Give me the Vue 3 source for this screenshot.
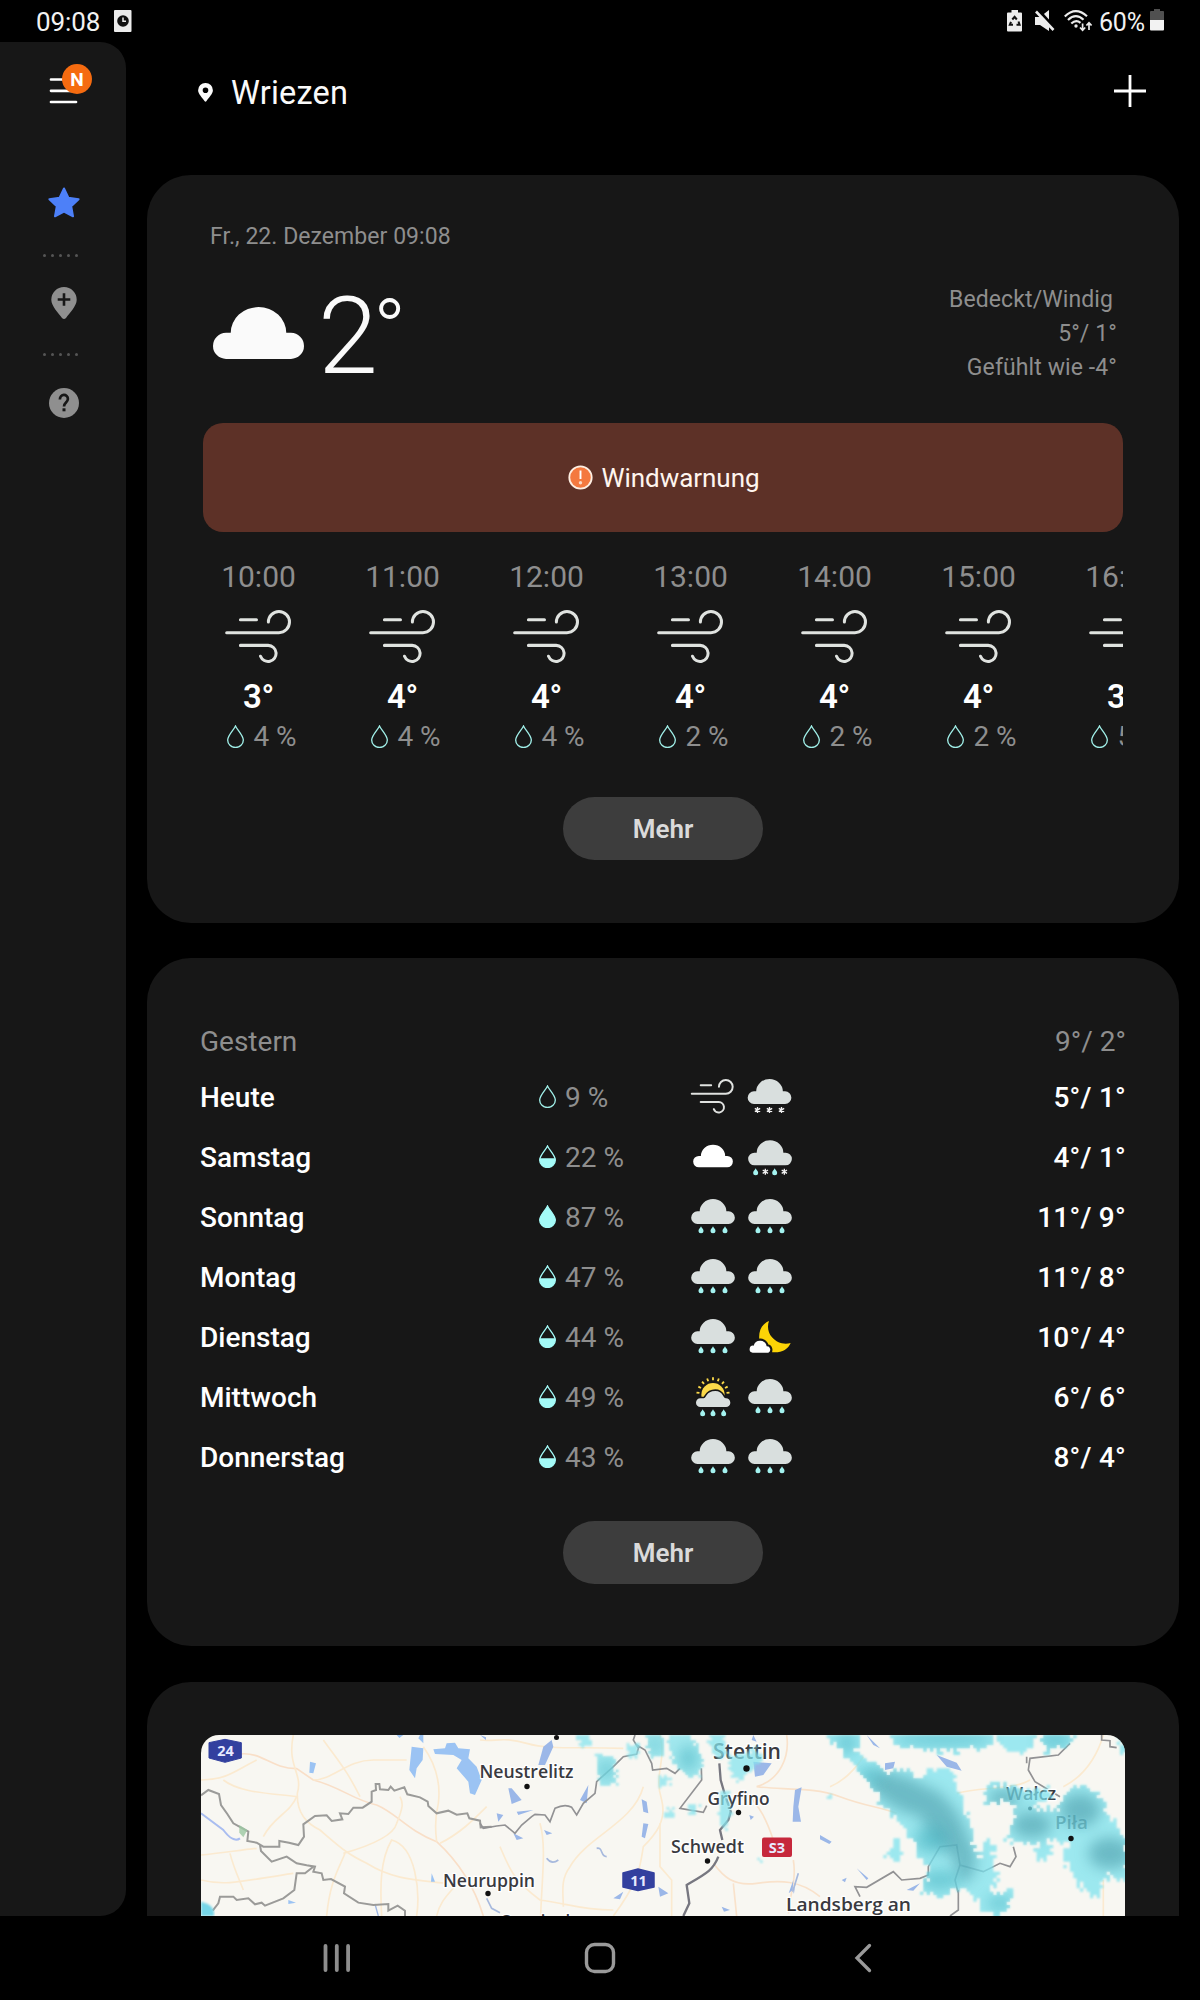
<script setup>
import { h } from 'vue'

const hours = [
  { time: '10:00', temp: '3°', rain: '4 %' },
  { time: '11:00', temp: '4°', rain: '4 %' },
  { time: '12:00', temp: '4°', rain: '4 %' },
  { time: '13:00', temp: '4°', rain: '2 %' },
  { time: '14:00', temp: '4°', rain: '2 %' },
  { time: '15:00', temp: '4°', rain: '2 %' },
  { time: '16:00', temp: '3°', rain: '5 %' },
]

const days = [
  { name: 'Heute', rain: '9 %', level: 'empty', icons: ['wind', 'snow'], temp: '5°/ 1°' },
  { name: 'Samstag', rain: '22 %', level: 'half', icons: ['cloud', 'sleet'], temp: '4°/ 1°' },
  { name: 'Sonntag', rain: '87 %', level: 'full', icons: ['rain', 'rain'], temp: '11°/ 9°' },
  { name: 'Montag', rain: '47 %', level: 'half', icons: ['rain', 'rain'], temp: '11°/ 8°' },
  { name: 'Dienstag', rain: '44 %', level: 'half', icons: ['rain', 'moon'], temp: '10°/ 4°' },
  { name: 'Mittwoch', rain: '49 %', level: 'half', icons: ['sunrain', 'rain'], temp: '6°/ 6°' },
  { name: 'Donnerstag', rain: '43 %', level: 'half', icons: ['rain', 'rain'], temp: '8°/ 4°' },
]

const DROP = 'M25.5 3C31 15 49 31 49 45A23.5 22.5 0 0 1 2 45C2 31 20 15 25.5 3Z'
const CLOUD = 'M39 155A39 39 0 0 1 39 77H53A83 77 0 0 1 219 77H233A39 39 0 0 1 233 155Z'
const WIND = 'M46 29H94M5 67.5H161A31.5 31.5 0 1 0 129.5 36M46 105.5H129A24 24 0 1 1 106 138'

const Drop = ({ level = 'empty' }) =>
  h('svg', { width: 17, height: 23, viewBox: '0 0 51 69' }, [
    h('path', { d: DROP, fill: level === 'full' ? '#a4fbf8' : 'none', stroke: level === 'empty' ? '#a0efe8' : '#a4fbf8', 'stroke-width': 4 }),
    level === 'half' ? h('path', { d: 'M2 40H49V45A23.5 22.5 0 0 1 2 45Z', fill: '#a4fbf8' }) : null,
  ])

const mini = (x, y) => h('path', { d: `M${x} ${y}C${x + 2} ${y + 5} ${x + 7.5} ${y + 8} ${x + 7.5} ${y + 13}A7.5 7.5 0 0 1 ${x - 7.5} ${y + 13}C${x - 7.5} ${y + 8} ${x - 2} ${y + 5} ${x} ${y}Z`, fill: '#a4f3f0' })
const flake = (x, y) => h('path', { d: `M${x} ${y - 9}V${y + 9}M${x - 8} ${y - 5}L${x + 8} ${y + 5}M${x + 8} ${y - 5}L${x - 8} ${y + 5}`, stroke: '#f2f2f2', 'stroke-width': 4, fill: 'none' })
const bigCloud = (y) => h('path', { d: CLOUD, fill: '#d9dfde', transform: `translate(-65.5 ${y}) scale(.482)` })

const Sky = ({ kind }) => {
  let kids = []
  if (kind === 'wind') kids = [h('path', { d: WIND, transform: 'translate(-67 -54) scale(.655)', fill: 'none', stroke: '#e0e2e0', 'stroke-width': 9, 'stroke-linecap': 'round' })]
  if (kind === 'cloud') kids = [h('path', { d: CLOUD, fill: '#fff', transform: 'translate(-59.5 -37) scale(.438)' })]
  if (kind === 'rain') kids = [bigCloud(-54), mini(-36, 28), mini(0, 28), mini(36, 28)]
  if (kind === 'snow') kids = [h('g', { transform: 'translate(-1.5 0)' }, [bigCloud(-54), flake(-36, 39), flake(0, 39), flake(36, 39)])]
  if (kind === 'sleet') kids = [bigCloud(-50), mini(-43, 34), flake(-14, 44), mini(14, 34), flake(43, 44)]
  if (kind === 'moon')
    kids = [
      h('path', { d: 'M-3 -48C-26 -38 -35 -16 -32 8C-26 34 -8 45 15 46C37 46 55 36 62 18C42 25 18 16 6 1C-6 -13 -9 -31 -3 -48Z', fill: '#fcd406' }),
      h('path', { d: 'M-52 47A10.5 10.5 0 0 1 -49 26A20 20 0 0 1 -10 28A10 10 0 0 1 -5 47Z', fill: '#fff', stroke: '#171717', 'stroke-width': 13, 'paint-order': 'stroke' }),
    ]
  if (kind === 'sunrain') {
    const rays = Array.from({ length: 9 }, (_, i) => {
      const a = ((188 + i * 20.5) * Math.PI) / 180
      return `M${41 * Math.cos(a)} ${-6 + 44 * Math.sin(a)}L${50 * Math.cos(a)} ${-6 + 53 * Math.sin(a)}`
    }).join('')
    kids = [
      h('path', { d: rays, stroke: '#fbd94a', 'stroke-width': 5.5 }),
      h('circle', { cx: 0, cy: -7, r: 35, fill: '#fbd94a' }),
      h('path', { d: 'M-38 30A13 13 0 0 1 -38 4H-28C-20 4 -21 -18 7 -18C31 -18 29 4 39 4A13 13 0 0 1 39 30Z', fill: '#d9dfde', stroke: '#171717', 'stroke-width': 10, 'paint-order': 'stroke' }),
      h('rect', { x: -60, y: 30, width: 120, height: 12, fill: '#171717' }),
      mini(-31, 37), mini(0, 37), mini(32, 37),
    ]
  }
  return h('svg', { width: 48, height: 48, viewBox: '-72 -72 144 144' }, kids)
}

// Precipitation areas on the map, outlined as polygons and filled with small cells
const shift = (poly) => poly.map((v, i) => v + (i % 2 ? 150 : 1080))
const zones = [
  [-55, 15, 60, 15, 50, 60, 90, 90, 140, 125, 200, 118, 240, 150, 275, 115, 340, 122, 352, 190, 385, 260, 400, 330, 420, 390, 432, 330, 470, 335, 460, 400, 470, 440, 450, 490, 515, 480, 512, 525, 480, 557, 425, 540, 400, 495, 350, 475, 300, 505, 243, 482, 272, 420, 230, 370, 215, 320, 135, 235, 90, 160, 45, 110, -10, 50],
  [140, 15, 462, 15, 455, 50, 330, 65, 230, 62, 160, 42],
  [468, 15, 590, 15, 550, 68, 490, 55],
  [600, 15, 708, 15, 682, 50, 620, 72],
  [434, 182, 460, 160, 500, 170, 530, 182, 620, 175, 640, 205, 590, 225, 600, 245, 655, 235, 680, 185, 720, 160, 790, 200, 800, 245, 856, 330, 856, 455, 800, 430, 775, 505, 735, 480, 690, 425, 668, 370, 700, 350, 660, 330, 560, 342, 500, 330, 528, 260, 512, 212, 440, 218],
  [588, 350, 642, 348, 622, 400, 590, 388],
  [162, 305, 186, 350, 180, 392, 138, 390, 155, 350],
  [830, 20, 856, 35, 856, 85, 838, 60],
].map(shift)
const smallZones = [
  [290, 165, 332, 165, 330, 200, 300, 200], [350, 225, 405, 235, 410, 315, 360, 315], [440, 190, 480, 190, 475, 235, 445, 230],
  [500, 165, 550, 165, 550, 240, 510, 235], [568, 165, 630, 165, 665, 220, 665, 285, 625, 295, 575, 240],
  [680, 165, 730, 165, 745, 225, 710, 235], [745, 235, 830, 205, 850, 240, 770, 305, 750, 280], [535, 285, 570, 290, 570, 320, 540, 325],
  [555, 390, 585, 380, 580, 410, 555, 415], [620, 375, 660, 380, 650, 402, 625, 400], [715, 335, 750, 330, 755, 400, 730, 460, 715, 410],
  [1033, 350, 1053, 345, 1050, 365], [835, 530, 848, 530, 842, 550],
]
const inside = (poly, x, y) => {
  let hit = false
  for (let i = 0, j = poly.length - 2; i < poly.length; j = i, i += 2) {
    const [xi, yi, xj, yj] = [poly[i], poly[i + 1], poly[j], poly[j + 1]]
    if (yi > y !== yj > y && x < ((xj - xi) * (y - yi)) / (yj - yi) + xi) hit = !hit
  }
  return hit
}
const noise = (a, b) => {
  const s = Math.sin(a * 12.9898 + b * 78.233) * 43758.5453
  return s - Math.floor(s) - 0.5
}
const cells = (polys, size, spread) => {
  let d = ''
  for (let y = 165; y < 708; y += size)
    for (let x = 280; x < 1940; x += size) {
      const px = x + size / 2 + noise(x, y) * spread
      const py = Math.max(167, y + size / 2 + noise(y, x) * spread)
      if (polys.some((p) => inside(p, px, py))) d += `M${x} ${y}h${size}v${size}h-${size}z`
    }
  return d
}
const radar = cells(zones, 10, 20)
const radarSmall = cells(smallZones, 8, 14)
</script>

<template>
  <div class="screen">
    <header class="status">
      <span class="clock">09:08</span>
      <svg class="st-app" width="18" height="23" viewBox="0 0 18 23"><rect width="17.500" height="22" rx="1" fill="#ececec" /><circle cx="9" cy="11" r="5.800" fill="#111" /><path d="M9 7.500V11.300H12" stroke="#ececec" stroke-width="1.500" fill="none" /></svg>
      <span class="spacer"></span>
      <svg class="st-bat" width="16" height="22" viewBox="0 0 16 22"><path d="M4.500 0H11V2.500H14Q15 2.500 15 3.500V20.500Q15 21.500 14 21.500H1Q0 21.500 0 20.500V3.500Q0 2.500 1 2.500H4.500Z" fill="#ececec" /><path d="M5.300 9.500L7.600 6.800L9.800 9.500M11.500 11.500L12.600 14.800H9.500M6 14.800H2.800L4 11.800" fill="none" stroke="#111" stroke-width="2" /></svg>
      <svg class="st-mute" width="20" height="22" viewBox="0 0 20 22"><path d="M0 7H5L14 0V21L5 15H0Z" fill="#ececec" /><path d="M2 -1.500L21 19.500" stroke="#000" stroke-width="3" /><path d="M1 1.500L18.500 20" stroke="#ececec" stroke-width="2.600" /></svg>
      <svg class="st-wifi" width="29" height="22" viewBox="0 0 29 22" fill="none" stroke="#ececec" stroke-width="2.200"><path d="M.8 6.500Q11.500 -4 23 6.200M4 10Q11.700 2.500 19.500 9.700M7.300 13.500Q12 9 16.500 12.800" /><circle cx="12" cy="16" r="1.700" fill="#ececec" stroke="none" /><path d="M18.600 13.500V20M16 17.500L18.600 20.300L21.200 17.500M25 20V13M22.400 15.500L25 12.800L27.600 15.500" stroke-width="1.700" /></svg>
      <span class="pct">60%</span>
      <svg class="st-level" width="15" height="22" viewBox="0 0 15 22"><path d="M4 0H10V2H13.200Q14 2 14 3V11H0V3Q0 2 1 2H4Z" fill="#505050" /><path d="M0 11H14V20.500Q14 21.500 13 21.500H1Q0 21.500 0 20.500Z" fill="#f2f2f2" /></svg>
    </header>

    <div class="body">
      <aside class="rail">
        <div class="menu">
          <svg width="30" height="26" viewBox="0 0 30 26"><path d="M2 3H28M2 14.300H28M2 25.500H27" transform="translate(0 -1.500)" stroke="#fff" stroke-width="2.700" stroke-linecap="round" /></svg>
          <span class="badge">N</span>
        </div>
        <svg class="star" width="32" height="31" viewBox="0 0 32 31"><path d="M16 1.500L20.400 10.800L30.600 12.200L23.200 19.200L25 29.300L16 24.500L7 29.300L8.800 19.200L1.400 12.200L11.600 10.800Z" fill="#4d80f8" stroke="#4d80f8" stroke-width="2" stroke-linejoin="round" /></svg>
        <div class="dots"><i v-for="n in 5" :key="n"></i></div>
        <svg class="place" width="26" height="32" viewBox="0 0 26 32"><path d="M13 0A12.700 12.700 0 0 1 25.700 12.700C25.700 19 18.500 26 15 31Q13 33 11 31C7.500 26 .3 19 .3 12.700A12.700 12.700 0 0 1 13 0Z" fill="#8f8f8f" /><path d="M13 6.200V18.800M6.700 12.500H19.300" stroke="#171717" stroke-width="2.600" /></svg>
        <div class="dots"><i v-for="n in 5" :key="n"></i></div>
        <svg class="help" width="30" height="30" viewBox="0 0 30 30"><circle cx="15" cy="15" r="15" fill="#8f8f8f" /><path d="M10.900 11.500C10.700 5.400 19 5.600 18.900 11C18.700 14.500 15 14.500 15 18.500" fill="none" stroke="#171717" stroke-width="2.700" /><rect x="13.500" y="20.300" width="3" height="3" fill="#171717" /></svg>
      </aside>

      <main class="content">
        <div class="top">
          <svg width="15" height="19" viewBox="0 0 15 19"><path fill-rule="evenodd" d="M7.500 0A7.300 7.300 0 0 1 14.900 7.300C14.900 11 10.500 15 8.500 18Q7.500 19.300 6.500 18C4.500 15 .1 11 .1 7.300A7.300 7.300 0 0 1 7.500 0ZM7.500 4.500A2.800 2.800 0 1 0 7.500 10.100A2.800 2.800 0 1 0 7.500 4.500Z" fill="#fafafa" /></svg>
          <h1>Wriezen</h1>
          <svg width="32" height="32" viewBox="0 0 32 32"><path d="M16 0V32M0 16H32" stroke="#fff" stroke-width="2.800" /></svg>
        </div>

        <section class="card now">
          <p class="date">Fr., 22. Dezember 09:08</p>
          <div class="current">
            <svg class="big-cloud" width="91" height="52" viewBox="0 0 272 155"><path :d="CLOUD" fill="#fafafa" /></svg>
            <span class="temp">2<span class="unit">°</span></span>
            <div class="info">
              <span class="cond">Bedeckt/Windig</span>
              <span>5°/ 1°</span>
              <span>Gefühlt wie -4°</span>
            </div>
          </div>
          <div class="warning">
            <svg width="25" height="25" viewBox="0 0 25 25"><circle cx="12.500" cy="12.500" r="11.200" fill="#f4793f" stroke="#fdeee2" stroke-width="1.800" /><path d="M12.500 5.500V14" stroke="#fff" stroke-width="1.900" /><circle cx="12.500" cy="17.700" r="1.700" fill="#fbd9c4" /></svg>
            <span>Windwarnung</span>
          </div>
          <div class="hours">
            <div v-for="hour in hours" :key="hour.time" class="hour">
              <span class="time">{{ hour.time }}</span>
              <svg width="66" height="53" viewBox="0 0 197 158"><path :d="WIND" fill="none" stroke="#e0e3e0" stroke-width="9" stroke-linecap="round" /></svg>
              <span class="deg">{{ hour.temp }}</span>
              <span class="rain"><Drop level="empty" />{{ hour.rain }}</span>
            </div>
          </div>
          <button class="more">Mehr</button>
        </section>

        <section class="card week">
          <div class="day past"><span class="name">Gestern</span><span class="range">9°/ 2°</span></div>
          <div v-for="day in days" :key="day.name" class="day">
            <span class="name">{{ day.name }}</span>
            <span class="chance" :class="day.level"><Drop :level="day.level" />{{ day.rain }}</span>
            <span class="sky"><Sky v-for="(icon, i) in day.icons" :key="i" :kind="icon" /></span>
            <span class="range">{{ day.temp }}</span>
          </div>
          <button class="more">Mehr</button>
        </section>

        <section class="card radar">
          <svg class="map" width="924" height="181" viewBox="0 0 924 181">
            <defs>
              <filter id="soft" x="-60%" y="-60%" width="220%" height="220%"><feGaussianBlur stdDeviation="20" /></filter>
              <filter id="fine" x="-5%" y="-5%" width="110%" height="110%"><feGaussianBlur stdDeviation="3" /></filter>
              <clipPath id="wet"><path :d="radar" /><path :d="radarSmall" /></clipPath>
            </defs>
            <rect width="924" height="181" fill="#f8f7f2" />

            <!-- western part -->
            <g transform="translate(-61 -55) scale(.33333)">
              <g fill="none" stroke="#fbead0" stroke-width="5">
                <path d="M300 222C370 215 390 265 470 266L520 300C600 320 640 360 710 375C770 400 800 450 890 485C950 540 1000 610 1030 708" stroke="#f9dfc8" />
                <path d="M460 165C440 260 490 280 472 340C470 400 500 430 540 450C610 510 620 520 680 550C760 600 830 600 920 610" />
                <path d="M183 300C260 300 290 270 350 240M250 300C300 340 400 340 470 350C450 400 400 410 370 470M520 300C580 300 620 240 700 240H800M550 180C600 250 620 270 660 350" />
                <path d="M850 200C900 270 900 330 895 370C880 430 890 480 890 485M610 520C680 500 760 470 770 430C790 380 790 370 780 350M615 520C600 560 570 600 560 708M725 708C720 620 720 540 755 480C830 500 840 640 830 708" />
                <path d="M183 525C240 520 300 510 350 505M270 520C280 560 290 580 310 630M183 600C260 620 320 600 460 580M890 708C900 660 930 640 960 600M1040 380C1000 420 960 460 900 490" />
              </g>
              <g fill="#9bc3f3">
                <path d="M815 200L850 205L848 240L830 265L825 295L808 270Z" />
                <path d="M880 208L915 205L920 190L945 188L955 205L990 208L985 235L1010 260L1025 300L1005 345L990 340L985 305L950 265L965 240L940 225L885 222Z" />
                <path d="M510 245L528 250L520 280L508 278ZM875 580L885 605H873ZM840 165H850V190L835 175ZM445 660L468 668L445 672ZM770 165H790L778 174Z" />
              </g>
              <path d="M183 400L250 450Q280 490 300 475" fill="none" stroke="#a9bdf0" stroke-width="6" />
              <path d="M705 672L715 708" fill="none" stroke="#9db6e5" stroke-width="4" />
              <g fill="none" stroke="#9b9b99" stroke-width="6">
                <path d="M183 346L205 330L237 342L243 375L262 402L280 430L325 455L322 483L350 488L370 500H418V483L447 488L475 495L492 470L490 433L525 408L560 406L575 423L607 418L600 400L625 402L640 383H668L695 365V335L708 330L707 312H718L720 328L745 330L752 320L763 332L793 322L802 343L840 352L863 365L865 378L890 400L925 392L950 404L982 400L988 415L1020 422L1022 442L1055 440" />
                <path d="M360 495L363 513L395 545L440 530L470 550L500 556L525 560L520 575L545 580L550 600L573 597L615 620L612 640L655 668L700 675L745 672V692L773 677L795 692V708" />
                <path d="M520 560L495 580H470L463 630L430 655L375 677L365 668L345 673L325 655L290 660L280 650H240L235 670L218 692" />
              </g>
              <path d="M298 435L322 450L310 472L298 458Z" fill="#9cc8a2" opacity=".8" />
              <path d="M207 188L255 178L304 188V234L255 247L207 234Z" fill="#33409f" stroke="#33409f" stroke-width="3" stroke-linejoin="round" />
              <path d="M183 665C200 670 225 675 222 708H183Z" fill="#76d6e8" filter="url(#fine)" />
            </g>

            <!-- central and eastern part -->
            <g transform="translate(279 -55) scale(.33333)">
              <g fill="none" stroke="#fbead0" stroke-width="5">
                <path d="M0 180C50 185 70 170 140 190S280 200 430 205M540 165C560 250 520 280 545 360C560 420 530 460 490 500C480 560 480 600 400 708" />
                <path d="M60 500C90 570 100 600 180 660C260 670 300 690 400 690M180 430C200 500 185 600 182 708M490 320C460 430 320 470 270 560C240 600 250 640 250 680M540 430V560L575 600V708" />
                <path d="M920 165C930 230 900 300 830 320C900 330 1000 320 1080 350S1200 380 1250 400M800 340C840 380 860 420 880 480M700 550C730 590 760 620 830 610C900 600 960 600 1020 650M760 610L770 708M940 540C950 600 930 640 925 700" stroke="#f9e2cb" />
                <path d="M1050 320C1100 300 1130 260 1150 230M1430 340C1500 320 1600 330 1650 300M1750 320C1830 280 1860 200 1870 165M1870 600V708" />
              </g>
              <g fill="#9bb7e8">
                <path d="M190 200L215 180L220 200L195 255H175Z" />
                <path d="M820 245L875 250L850 285L825 290ZM945 330L965 322L955 380L963 425H938L940 380ZM485 358L500 365L505 400L490 395ZM490 430L505 432L495 475L485 470Z" />
                <path d="M85 325L95 325L125 360L95 372ZM50 400L70 405L55 425ZM110 395L160 390L115 405ZM192 450L217 460L200 465ZM300 360L325 315L320 370ZM535 620L565 640L540 650ZM400 655L430 635L420 658ZM1020 465L1055 485L1048 492L1020 478ZM926 640L940 600L938 630ZM725 680L750 690L732 695ZM808 405L822 410L812 420ZM100 460L130 475L110 480ZM0 165L18 172V180Z" />
                <path d="M1160 165L1200 205L1180 195ZM1215 250L1245 245L1240 265L1215 270ZM1370 225L1430 248L1445 272L1400 260ZM1470 215L1495 230ZM820 165L830 185L815 180ZM940 640L948 600L942 640ZM1130 565L1165 595L1160 600ZM1085 600L1100 593L1095 607ZM1280 630L1320 610L1300 632Z" />
              </g>
              <path d="M350 505C370 500 360 530 380 530M200 535Q215 555 235 540M20 655L35 685L60 698M955 580L938 635" fill="none" stroke="#a7b9dd" stroke-width="5" />
              <g fill="none" stroke="#929294" stroke-width="5">
                <path d="M0 430L10 445L50 438L75 435L105 460L125 435L155 410L165 403L195 405L210 425L225 385Q255 370 275 382L290 405L310 370L345 340L350 305L400 260L430 230L470 222L475 205L460 180L465 165M470 195L495 210L515 250L518 270L560 265L585 280L600 265M664 265L665 300L600 385L670 397L680 377" />
                <path d="M718 250L722 300L735 345L752 395L745 420L720 450L727 480M715 530C700 570 680 580 620 615L628 670L610 708" stroke-width="7" stroke="#777780" />
                <path d="M1140 650L1125 620L1160 622L1240 575L1265 600L1320 595L1345 585V560L1380 500L1430 495L1440 555L1510 575L1560 550L1590 560L1608 530L1600 500M1435 630V690L1410 708M1440 555L1425 600L1435 640" />
                <path d="M1770 190L1735 225L1650 235L1645 270L1665 305L1740 350M1865 165V180L1890 182V200L1910 203M1640 230V250" />
              </g>
            </g>

            <g class="labels">
              <text x="278.500" y="43" textLength="94" lengthAdjust="spacingAndGlyphs">Neustrelitz</text>
              <text x="242" y="151.500" textLength="92" lengthAdjust="spacingAndGlyphs">Neuruppin</text>
              <text x="512" y="24" textLength="68" lengthAdjust="spacingAndGlyphs" class="big">Stettin</text>
              <text x="506.500" y="70" textLength="62" lengthAdjust="spacingAndGlyphs">Gryfino</text>
              <text x="470" y="118" textLength="73" lengthAdjust="spacingAndGlyphs">Schwedt</text>
              <text x="585" y="175.500" textLength="125" lengthAdjust="spacingAndGlyphs">Landsberg an</text>
              <text x="805" y="65" textLength="50" lengthAdjust="spacingAndGlyphs">Wałcz</text>
              <text x="854" y="94" textLength="33" lengthAdjust="spacingAndGlyphs">Piła</text>
              <text x="299" y="193" textLength="76" lengthAdjust="spacingAndGlyphs">Oranienb</text>
            </g>
            <g fill="#111">
              <circle cx="326" cy="51.500" r="2.700" /><circle cx="287" cy="158.500" r="2.700" /><circle cx="355.500" cy="2.500" r="2.500" />
              <circle cx="537.500" cy="77.500" r="2.700" /><circle cx="506.500" cy="126" r="2.700" /><circle cx="829" cy="73.500" r="2" />
            </g>
            <path d="M422 138L437 134L453 138V152L437 155.500L422 152Z" fill="#33409f" stroke="#33409f" stroke-width="1.500" stroke-linejoin="round" />
            <rect x="561" y="102.500" width="30" height="19.500" rx="2" fill="#c6283c" />
            <g class="shields">
              <text x="24.500" y="21">24</text>
              <text x="437.500" y="150.500">11</text>
              <text x="576" y="118">S3</text>
            </g>

            <g transform="translate(279 -55) scale(.33333)">
              <g opacity=".74" filter="url(#fine)">
                <path :d="radar" fill="#7de3ef" />
                <path :d="radarSmall" fill="#86e4ee" />
              </g>
              <g clip-path="url(#wet)">
                <g fill="#4596a4" opacity=".55" filter="url(#soft)">
                  <ellipse cx="1280" cy="345" rx="120" ry="50" transform="rotate(25 1280 345)" />
                  <ellipse cx="1390" cy="430" rx="125" ry="52" transform="rotate(58 1390 430)" />
                  <ellipse cx="1455" cy="540" rx="32" ry="65" />
                  <ellipse cx="1800" cy="390" rx="62" ry="50" />
                  <ellipse cx="1655" cy="435" rx="60" ry="40" />
                  <ellipse cx="1890" cy="520" rx="65" ry="48" />
                  <ellipse cx="1570" cy="355" rx="46" ry="28" />
                </g>
                <g fill="#35a8b8" opacity=".45" filter="url(#soft)">
                  <ellipse cx="380" cy="270" rx="24" ry="30" /><ellipse cx="625" cy="235" rx="30" ry="40" /><ellipse cx="1100" cy="190" rx="30" ry="34" />
                  <ellipse cx="1390" cy="178" rx="150" ry="20" /><ellipse cx="1725" cy="180" rx="50" ry="26" /><ellipse cx="1560" cy="670" rx="40" ry="22" />
                  <ellipse cx="1380" cy="600" rx="60" ry="30" /><ellipse cx="1350" cy="480" rx="50" ry="40" /><ellipse cx="525" cy="195" rx="20" ry="24" /><ellipse cx="1170" cy="285" rx="40" ry="24" />
                </g>
              </g>
            </g>
            <circle cx="870" cy="103.500" r="2.700" fill="#111" />
            <circle cx="545.500" cy="33.500" r="3.200" fill="#111" />
          </svg>
        </section>
      </main>
    </div>

    <nav class="nav">
      <span><svg width="28" height="30" viewBox="0 0 28 30"><path d="M3 3V27M14.300 3V27M25.600 3V27" transform="translate(-.5 0)" stroke="#8e8e8e" stroke-width="3.800" stroke-linecap="round" /></svg></span>
      <span><svg width="32" height="32" viewBox="0 0 32 32"><rect x="2.500" y="2.500" width="27" height="27" rx="8" fill="none" stroke="#9a9a9a" stroke-width="3.400" /></svg></span>
      <span><svg width="18" height="30" viewBox="0 0 18 30"><path d="M15.500 2.500L3 15L15.500 27.500" fill="none" stroke="#9a9a9a" stroke-width="3.300" stroke-linecap="round" /></svg></span>
    </nav>
  </div>
</template>

<style>
html,
body {
  background: #000;
}
</style>

<style scoped>
* { box-sizing: border-box; }
svg { display: block; flex: none; }
.screen { width: 1200px; height: 2000px; background: #000; color: #fafafa; font-family: Roboto, 'Liberation Sans', sans-serif; display: flex; flex-direction: column; overflow: hidden; }
.status { height: 42px; flex: none; display: flex; align-items: center; padding: 0 35px 0 36px; font-size: 25px; color: #f2f2f2; }
.clock { line-height: 42px; padding-top: 2px; font-size: 26px; letter-spacing: -.1px; }
.st-app { margin-left: 14px; }
.spacer { flex: 1; }
.st-mute { margin-left: 12px; }
.st-wifi { margin-left: 9px; }
.pct { margin-left: 6px; padding-top: 2px; letter-spacing: -.1px; }
.st-level { margin-left: 5px; margin-top: -2px; }
.body { display: flex; height: 1874px; flex: none; overflow: hidden; }
.rail { width: 126px; height: 1874px; background: #171717; border-radius: 0 26px 26px 0; padding-left: 2px; display: flex; flex-direction: column; align-items: center; flex: none; }
.menu { position: relative; margin-top: 36px; height: 26px; width: 30px; }
.badge { position: absolute; left: 13px; top: -14px; width: 30px; height: 30px; border-radius: 50%; background: #f56b10; color: #fff; font-size: 19px; font-weight: 700; line-height: 31px; text-align: center; }
.star { margin-top: 83px; }
.dots { display: flex; gap: 5px; height: 3px; margin-top: 36px; margin-left: -7px; }
.dots i { width: 3px; height: 3px; border-radius: 50%; background: #555; }
.place { margin-top: 30px; }
.place + .dots { margin-top: 34px; }
.help { margin-top: 32px; }
.content { flex: 1; padding: 0 21px; display: flex; flex-direction: column; min-width: 0; }
.top { height: 133px; flex: none; display: flex; align-items: flex-start; padding: 33px 33px 0 51px; }
.top svg:first-child { margin-top: 8px; }
.top svg:last-child { margin-left: auto; }
h1 { margin: -1px 0 0 18px; font-size: 32.500px; line-height: 38px; font-weight: 400; color: #fafafa; letter-spacing: .2px; }
.card { background: #171717; border-radius: 44px; flex: none; }
.now { height: 748px; padding: 48px 56px 0; display: flex; flex-direction: column; }
.date { margin: 0 0 0 7px; font-size: 23px; line-height: 28px; color: #8e8e8e; letter-spacing: .05px; }
.current { display: flex; height: 172px; padding-left: 10px; }
.big-cloud { margin-top: 56px; }
.temp { font-size: 108px; font-weight: 300; line-height: 120px; margin: 25px 0 0 14px; letter-spacing: -4px; display: flex; }
.unit { font-size: 88px; line-height: 110px; margin-left: -1px; font-weight: 350; }
.info { margin-left: auto; padding: 32px 6px 0 0; display: flex; flex-direction: column; align-items: flex-end; font-size: 23px; line-height: 34px; color: #8e8e8e; letter-spacing: .1px; }
.cond { padding-right: 4px; }
.warning { height: 109px; flex: none; background: #5d3127; border-radius: 20px; display: flex; align-items: center; justify-content: center; gap: 8px; font-size: 26px; color: #fff5ee; padding-left: 2px; letter-spacing: -.05px; }
.hours { display: flex; gap: 33px; height: 265px; overflow: hidden; flex: none; }
.hour { width: 111px; flex: none; display: flex; flex-direction: column; align-items: center; white-space: nowrap; }
.time { font-size: 30px; line-height: 36px; margin-top: 27px; color: #8e8e8e; }
.hour > svg { margin: 15px 0 0 -1px; }
.deg { font-size: 33px; font-weight: 600; line-height: 38px; margin-top: 15px; color: #fff; letter-spacing: -.4px; }
.rain { font-size: 28px; line-height: 34px; margin-top: 4px; padding-left: 7px; color: #8e8e8e; display: flex; align-items: center; gap: 9px; }
.rain svg { margin-top: -1px; }
.more { width: 200px; height: 63px; border: 0; border-radius: 32px; background: #3d3d3d; color: #dadada; font: 600 26px Roboto, 'Liberation Sans', sans-serif; align-self: center; padding: 0; flex: none; }
.week { height: 688px; margin-top: 35px; padding: 57px 53px 0; display: flex; flex-direction: column; }
.day { height: 60px; flex: none; display: flex; align-items: center; font-size: 28px; font-weight: 500; color: #fff; }
.past { height: 52px; color: #8e8e8e; font-weight: 400; }
.name { width: 340px; }
.chance { width: 149px; font-weight: 400; color: #8e8e8e; display: flex; align-items: center; gap: 8px; white-space: nowrap; }
.chance svg { margin: -1px 0 0 -1px; }
.chance { gap: 9px; }
.sky { display: flex; gap: 9px; }
.range { margin-left: auto; letter-spacing: .25px; }
.past .range { letter-spacing: 0; }
.week .more { margin-top: 34px; }
.radar { height: 300px; margin-top: 36px; padding: 53px 54px 0; }
.map { border-radius: 18px 18px 0 0; }
.labels text { font: 600 18.500px 'Open Sans', 'Noto Sans', sans-serif; fill: #3a3a3f; stroke: #fff; stroke-width: 2.500px; paint-order: stroke; }
.labels .big { font-size: 21px; }
.shields text { font: 700 14.500px 'Open Sans', 'Noto Sans', sans-serif; fill: #e8eaff; text-anchor: middle; }
.nav { height: 84px; flex: none; display: flex; justify-content: center; }
.nav span { width: 263px; display: flex; align-items: center; justify-content: center; }
</style>
